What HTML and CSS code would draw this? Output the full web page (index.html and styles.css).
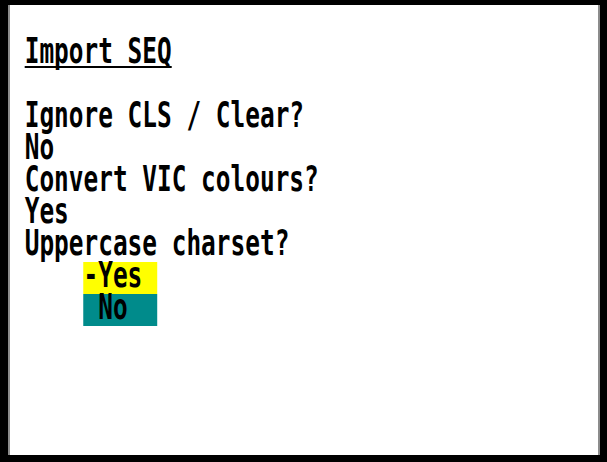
FILE: index.html
```html
<!DOCTYPE html>
<html>
<head>
<meta charset="utf-8">
<link rel="stylesheet" href="styles.css">
</head>
<body>
<div class="screen">
  <div class="text">
    <div class="row"></div>
    <div class="row"><span class="title">Import SEQ</span></div>
    <div class="row"></div>
    <div class="row">Ignore CLS / Clear?</div>
    <div class="row">No</div>
    <div class="row">Convert VIC colours?</div>
    <div class="row">Yes</div>
    <div class="row">Uppercase charset?</div>
    <div class="opt sel">-Yes</div>
    <div class="opt alt"> No</div>
  </div>
</div>
</body>
</html>
```
FILE: styles.css
```css
html, body {
  margin: 0;
  padding: 0;
  background: #000;
  width: 607px;
  height: 462px;
  overflow: hidden;
}
.screen {
  margin: 5px 0 0 8px;
  width: 588px;
  height: 449px;
  background: #fff;
  border-left: 2px solid #8c8c8c;
  border-right: 2px solid #8c8c8c;
  padding-top: 1px;
  box-sizing: content-box;
  overflow: hidden;
}
.text {
  font-family: "DejaVu Sans Mono", monospace;
  font-weight: bold;
  font-size: 35px;
  line-height: 27.7px;
  color: #000;
  width: 40ch;
  transform: scaleX(0.6977);
  transform-origin: left top;
}
.row {
  height: 32px;
  padding-left: 1ch;
  white-space: pre;
}
.title {
  text-decoration: underline;
  text-decoration-thickness: 2px;
  text-underline-offset: 3px;
  text-decoration-skip-ink: none;
}
.opt {
  height: 32px;
  width: 5ch;
  margin-left: 5ch;
  white-space: pre;
}
.sel {
  background: #ffff00;
}
.alt {
  background: #008b8b;
}
```
